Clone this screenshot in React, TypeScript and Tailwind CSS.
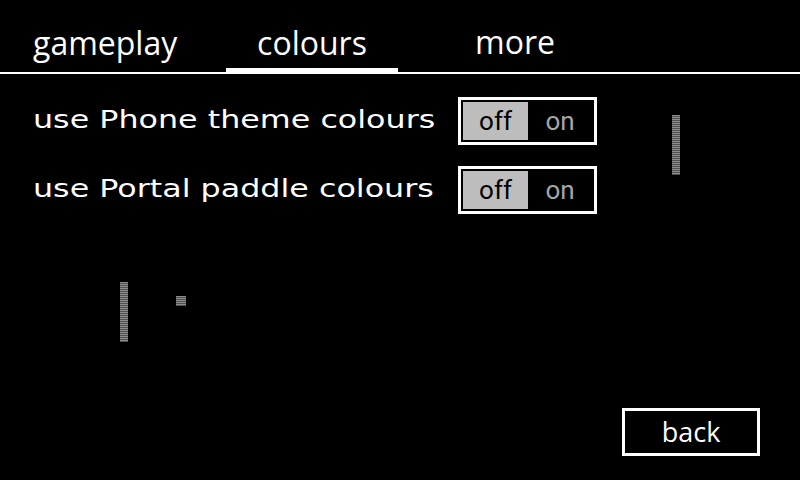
import React from "react";

const stripe =
  "bg-[repeating-linear-gradient(to_bottom,#8c8c8c_0px,#8c8c8c_1px,#505050_1px,#505050_2px)]";

function Toggle() {
  return (
    <div className="w-[139px] h-[48px] border-[3px] border-white p-[2px] flex">
      <div
        className="w-[65px] h-full bg-[#bdbdbd] text-black flex items-center justify-center text-[26px] leading-none"
        style={{ fontFamily: "Roboto, 'Noto Sans', sans-serif" }}
      >
        off
      </div>
      <div
        className="flex-1 h-full text-[#a6a6a6] flex items-center justify-center text-[26px] leading-none"
        style={{ fontFamily: "Roboto, 'Noto Sans', sans-serif" }}
      >
        on
      </div>
    </div>
  );
}

function Label({ text }: { text: string }) {
  return (
    <div className="w-[425px]">
      <span className="inline-block origin-left scale-x-[1.27] text-[25px] leading-none">
        {text}
      </span>
    </div>
  );
}

export default function App() {
  return (
    <div className="relative w-[800px] h-[480px] bg-black text-white overflow-hidden">
      {/* tabs */}
      <div
        className="flex h-[68px] items-end text-[32px] leading-none"
        style={{ fontFamily: "'Open Sans', sans-serif", fontWeight: 400 }}
      >
        <div className="w-[226px] pl-[33px] pb-[9px]">gameplay</div>
        <div className="w-[172px] text-center pb-[9px]">colours</div>
        <div className="w-[234px] text-center pb-[10px]">more</div>
      </div>
      <div className="flex h-[6px]">
        <div className="w-[226px] flex flex-col justify-end">
          <div className="h-[2px] bg-white" />
        </div>
        <div className="w-[172px] bg-white" />
        <div className="flex-1 flex flex-col justify-end">
          <div className="h-[2px] bg-white" />
        </div>
      </div>

      {/* settings */}
      <div
        className="flex flex-col gap-[21px] pt-[23px] pl-[33px]"
        style={{ fontFamily: "'DejaVu Sans', sans-serif" }}
      >
        <div className="flex items-center">
          <Label text="use Phone theme colours" />
          <Toggle />
        </div>
        <div className="flex items-center">
          <Label text="use Portal paddle colours" />
          <Toggle />
        </div>
      </div>

      {/* game pieces on the background canvas */}
      <div className={`absolute left-[120px] top-[282px] w-[8px] h-[60px] ${stripe}`} />
      <div className={`absolute left-[176px] top-[296px] w-[10px] h-[10px] ${stripe}`} />
      <div className={`absolute left-[672px] top-[115px] w-[8px] h-[60px] ${stripe}`} />

      {/* back button */}
      <div className="absolute left-[622px] top-[408px] w-[138px] h-[48px] border-[3px] border-white flex items-center justify-center">
        <span
          className="text-[27px] leading-none -mt-[2px]"
          style={{ fontFamily: "'Open Sans', sans-serif" }}
        >
          back
        </span>
      </div>
    </div>
  );
}
